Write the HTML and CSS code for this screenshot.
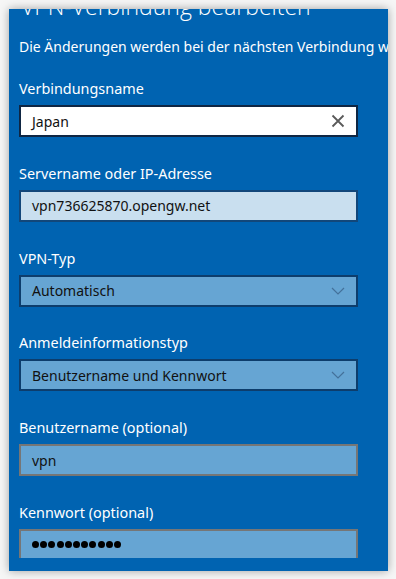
FILE: index.html
```html
<!DOCTYPE html>
<html lang="de">
<head>
  <meta charset="UTF-8">
  <meta name="viewport" content="width=device-width, initial-scale=1.0">
  <title>VPN-Verbindung bearbeiten</title>
  <link rel="stylesheet" href="styles.css">
</head>
<body>
  <div class="window">
    <div class="scroll">
      <h1 class="title">VPN-Verbindung bearbeiten</h1>
      <p class="intro">Die Änderungen werden bei der nächsten Verbindung wirksam.</p>

      <!-- Verbindungsname -->
      <div class="field">
        <label class="label">Verbindungsname</label>
        <div class="box box-active">
          <span class="value">Japan</span>
          <svg class="clear" width="14" height="14" viewBox="0 0 14 14">
            <path d="M1.5 1.5 L12.5 12.5 M12.5 1.5 L1.5 12.5" stroke="#5a5a5a" stroke-width="1.8" fill="none"/>
          </svg>
        </div>
      </div>

      <!-- Server -->
      <div class="field">
        <label class="label">Servername oder IP-Adresse</label>
        <div class="box box-light">
          <span class="value">vpn736625870.opengw.net</span>
        </div>
      </div>

      <!-- VPN-Typ -->
      <div class="field">
        <label class="label">VPN-Typ</label>
        <div class="box box-select">
          <span class="value">Automatisch</span>
          <svg class="chevron" width="14" height="8" viewBox="0 0 14 8">
            <polyline points="1,1 7,7 13,1" stroke="#44719a" stroke-width="1.2" fill="none"/>
          </svg>
        </div>
      </div>

      <!-- Anmeldeinformationstyp -->
      <div class="field">
        <label class="label">Anmeldeinformationstyp</label>
        <div class="box box-select">
          <span class="value">Benutzername und Kennwort</span>
          <svg class="chevron" width="14" height="8" viewBox="0 0 14 8">
            <polyline points="1,1 7,7 13,1" stroke="#44719a" stroke-width="1.2" fill="none"/>
          </svg>
        </div>
      </div>

      <!-- Benutzername -->
      <div class="field">
        <label class="label">Benutzername (optional)</label>
        <div class="box box-grey">
          <span class="value">vpn</span>
        </div>
      </div>

      <!-- Kennwort -->
      <div class="field">
        <label class="label">Kennwort (optional)</label>
        <div class="box box-grey">
          <span class="dots">
            <i></i><i></i><i></i><i></i><i></i><i></i><i></i><i></i><i></i><i></i><i></i>
          </span>
        </div>
      </div>
    </div>
  </div>
</body>
</html>
```

FILE: styles.css
```css
/* General styling */
* {
  margin: 0;
  padding: 0;
  box-sizing: border-box;
}

html, body {
  background: #f6f6f6;
  font-family: "Noto Sans", "Open Sans", sans-serif;
  height: 100%;
}

body {
  padding: 9px;
}

/* Blue settings panel */
.window {
  width: 379px;
  height: 562px;
  background: #0063b1;
  box-shadow: 0 0 9px rgba(0, 0, 0, 0.35);
  padding-bottom: 13px;
}

.scroll {
  height: 549px;
  overflow: hidden;
  padding-left: 10px;
}

.title {
  font-family: "Open Sans", sans-serif;
  font-weight: 300;
  font-size: 23px;
  line-height: 36px;
  color: #fff;
  white-space: nowrap;
  margin-top: -21px;
  padding-left: 2px;
}

.intro {
  font-size: 14px;
  line-height: 20px;
  color: #fff;
  white-space: nowrap;
  margin-top: 13px;
}

/* Form fields */
.field {
  display: flex;
  flex-direction: column;
  gap: 6px;
  margin-top: 22px;
}

.field + .field {
  margin-top: 26.8px;
}

.label {
  font-size: 14.4px;
  line-height: 20px;
  color: #fff;
}

.box {
  width: 339px;
  height: 32px;
  border: 2px solid;
  display: flex;
  align-items: center;
  padding: 0 10px 0 11px;
  font-size: 14px;
  color: #111;
}

.value {
  flex: 1;
  white-space: nowrap;
}

.box-active {
  background: #fff;
  border-color: #0f2643;
}

.box-light {
  background: #c9dfef;
  border-color: #12477a;
}

.box-select {
  background: #66a5d3;
  border-color: #0d3d6c;
}

.box-grey {
  background: #66a5d3;
  border-color: #767676;
}

.clear,
.chevron {
  margin-right: 1px;
}

.dots {
  display: flex;
  gap: 1.2px;
}

.dots i {
  width: 7px;
  height: 7px;
  border-radius: 50%;
  background: #000;
}
```
